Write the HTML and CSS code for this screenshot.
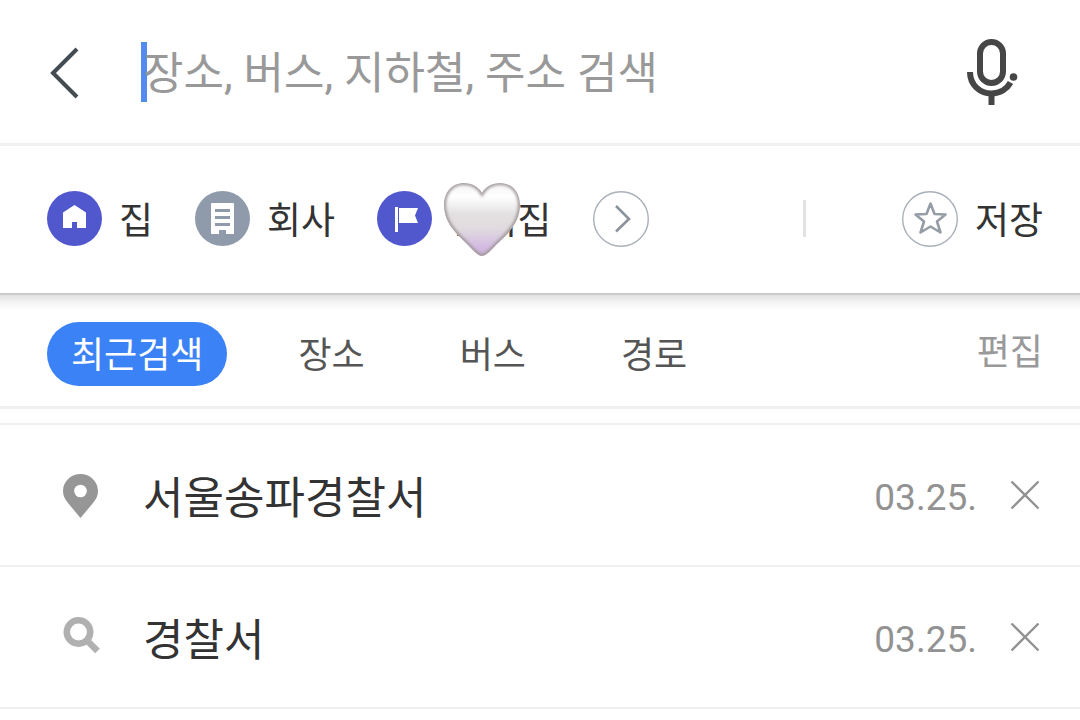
FILE: index.html
```html
<!DOCTYPE html>
<html lang="ko">
<head>
  <meta charset="UTF-8">
  <meta name="viewport" content="width=device-width, initial-scale=1">
  <title>검색</title>
  <link rel="stylesheet" href="styles.css">
</head>
<body>
  <header class="search-bar">
    <button type="button" class="back" aria-label="뒤로">
      <svg width="32" height="54" viewBox="0 0 32 54">
        <path d="M29 3 L5 27 L29 51" fill="none" stroke="#444b53" stroke-width="4"/>
      </svg>
    </button>
    <div class="search-field">
      <input type="text" class="search-input" placeholder="장소, 버스, 지하철, 주소 검색" aria-label="검색">
      <span class="caret"></span>
    </div>
    <button type="button" class="mic" aria-label="음성 검색">
      <svg width="52" height="68" viewBox="0 0 52 68" fill="none" stroke="#464646" stroke-width="6">
        <rect x="14" y="3" width="23" height="41" rx="11.5"/>
        <path d="M4 33 C4 46 14 54.500 25.500 54.500 C34 54.500 41 50 44.500 43.500"/>
        <path d="M25.500 54 V66"/>
        <circle cx="47.500" cy="38" r="3.800" fill="#464646" stroke="none"/>
      </svg>
    </button>
  </header>

  <nav class="shortcuts">
    <button type="button" class="shortcut">
      <svg class="badge" viewBox="0 0 55 55">
        <circle cx="27.500" cy="27.500" r="27.500" fill="#5157cd"/>
        <path d="M27.500 14 L39 21.500 V37 H30 V31 H25 V37 H16 V21.500 Z" fill="#fff"/>
      </svg>
      <span class="shortcut-name">집</span>
    </button>
    <button type="button" class="shortcut">
      <svg class="badge" viewBox="0 0 55 55">
        <circle cx="27.500" cy="27.500" r="27.500" fill="#8f9aaa"/>
        <path d="M17 12 H38 Q39 12 39 13 V43 H31 V39 H24 V43 H16 V13 Q16 12 17 12 Z" fill="#fff"/>
        <path d="M20 19.500 H35 M20 26.500 H35 M20 33.500 H35" stroke="#8f9aaa" stroke-width="3"/>
      </svg>
      <span class="shortcut-name">회사</span>
    </button>
    <button type="button" class="shortcut">
      <svg class="badge" viewBox="0 0 55 55">
        <circle cx="27.500" cy="27.500" r="27.500" fill="#5157cd"/>
        <path d="M18 16 H21 V41 H18 Z M22 17 H41 L38 24.500 L41 32 H22 Z" fill="#fff"/>
      </svg>
      <span class="shortcut-name">언니집</span>
      <svg class="heart" width="80" height="78" viewBox="0 0 80 78">
        <defs>
          <linearGradient id="heart-fill" x1="0" y1="0" x2="0" y2="1">
            <stop offset="0" stop-color="#f4f2f3"/>
            <stop offset=".2" stop-color="#ffffff"/>
            <stop offset=".42" stop-color="#e4e1e2"/>
            <stop offset=".62" stop-color="#dfdade"/>
            <stop offset=".85" stop-color="#d3bae3"/>
            <stop offset="1" stop-color="#c5b0d0"/>
          </linearGradient>
          <clipPath id="heart-clip">
            <path d="M40 75 C36 75 31 69 24 62 C12 51 2 40 2 24 C2 11 10 2 22 2 C30 2 37 6 40 12 C43 6 50 2 58 2 C70 2 78 11 78 24 C78 40 68 51 56 62 C49 69 44 75 40 75 Z"/>
          </clipPath>
          <filter id="heart-edge">
            <feGaussianBlur stdDeviation="1.800"/>
          </filter>
        </defs>
        <g clip-path="url(#heart-clip)">
          <rect width="80" height="78" fill="url(#heart-fill)"/>
          <path d="M40 75 C36 75 31 69 24 62 C12 51 2 40 2 24 C2 11 10 2 22 2 C30 2 37 6 40 12 C43 6 50 2 58 2 C70 2 78 11 78 24 C78 40 68 51 56 62 C49 69 44 75 40 75 Z" fill="none" stroke="#a09799" stroke-width="4" filter="url(#heart-edge)"/>
        </g>
      </svg>
    </button>
    <button type="button" class="shortcut" aria-label="더보기">
      <svg class="ring" viewBox="0 0 56 56" fill="none">
        <circle cx="28" cy="28" r="27.300" stroke="#a9b0b8" stroke-width="1.400"/>
        <path d="M23 15 L36 28 L23 40.500" stroke="#8b939c" stroke-width="2.600"/>
      </svg>
    </button>
    <span class="divider"></span>
    <button type="button" class="shortcut">
      <svg class="ring" viewBox="0 0 56 56" fill="none">
        <circle cx="28" cy="28" r="27.300" stroke="#a9b0b8" stroke-width="1.400"/>
        <path d="M28.500 12.500 L32.500 23 L43.500 23.500 L35 30.500 L38.500 41.500 L28.500 35.500 L18.500 41.500 L22 30.500 L13.500 23.500 L24.500 23 Z" stroke="#959da6" stroke-width="2.600" stroke-linejoin="round"/>
      </svg>
      <span class="shortcut-name">저장</span>
    </button>
  </nav>

  <div class="tabs">
    <button type="button" class="tab active">최근검색</button>
    <button type="button" class="tab">장소</button>
    <button type="button" class="tab">버스</button>
    <button type="button" class="tab">경로</button>
    <button type="button" class="edit">편집</button>
  </div>

  <ul class="history">
    <li class="history-item">
      <svg class="history-icon" viewBox="0 0 38 46">
        <path d="M18.500 2 C28 2 36 9.500 36 19 C36 24 34 27.500 31 31 L18.500 46 L6 31 C3 27.500 1 24 1 19 C1 9.500 9 2 18.500 2 Z" fill="#969696"/>
        <circle cx="18.500" cy="19" r="6.300" fill="#fff"/>
      </svg>
      <a href="#" class="history-name">서울송파경찰서</a>
      <time class="history-date">03.25.</time>
      <button type="button" class="remove" aria-label="삭제">
        <svg width="30" height="30" viewBox="0 0 30 30">
          <path d="M1.500 1.500 L28.500 28.500 M28.500 1.500 L1.500 28.500" stroke="#929292" stroke-width="2.400"/>
        </svg>
      </button>
    </li>
    <li class="history-item">
      <svg class="history-icon" viewBox="0 0 38 46" fill="none" stroke="#b0b0b0">
        <circle cx="16.500" cy="18" r="11.700" stroke-width="6.600"/>
        <path d="M25 26.500 L35.500 37" stroke-width="6.600"/>
      </svg>
      <a href="#" class="history-name">경찰서</a>
      <time class="history-date">03.25.</time>
      <button type="button" class="remove" aria-label="삭제">
        <svg width="30" height="30" viewBox="0 0 30 30">
          <path d="M1.500 1.500 L28.500 28.500 M28.500 1.500 L1.500 28.500" stroke="#929292" stroke-width="2.400"/>
        </svg>
      </button>
    </li>
  </ul>
</body>
</html>
```
FILE: styles.css
```css
* {
  margin: 0;
  padding: 0;
  box-sizing: border-box;
}

body {
  background: #fff;
  color: #333;
  font-family: "Noto Sans CJK KR", sans-serif;
}

button {
  border: 0;
  background: none;
  color: inherit;
  font: inherit;
  cursor: pointer;
}

svg {
  display: block;
  flex: none;
}

/* search bar */

.search-bar {
  display: flex;
  align-items: center;
  height: 146px;
  padding: 2px 62px 0 48px;
  border-bottom: 3px solid #f1f1f1;
}

.search-field {
  position: relative;
  flex: 1;
  margin-left: 63px;
}

.search-input {
  display: block;
  width: 100%;
  height: 62px;
  padding-top: 2px;
  border: 0;
  outline: 0;
  background: none;
  color: #333;
  font-family: Roboto, "Noto Sans CJK KR", sans-serif;
  font-size: 44px;
}

.search-input::placeholder {
  color: #999;
  opacity: 1;
}

.caret {
  position: absolute;
  z-index: -1;
  left: -2px;
  top: 0;
  width: 6px;
  height: 60px;
  background: #548bf0;
}

/* shortcuts */

.shortcuts {
  display: flex;
  align-items: center;
  gap: 42px;
  height: 149px;
  padding: 0 37px 2px 47px;
  border-bottom: 2px solid #cbcbcb;
}

.shortcut {
  position: relative;
  display: flex;
  align-items: center;
  gap: 17px;
  font-size: 37px;
  line-height: 54px;
  white-space: nowrap;
}

.shortcut-name {
  padding-bottom: 2px;
}

.badge {
  width: 55px;
  height: 55px;
}

.ring {
  width: 56px;
  height: 56px;
}

.heart {
  position: absolute;
  left: 65px;
  top: -10px;
}

.divider {
  width: 3px;
  height: 37px;
  margin-left: auto;
  margin-right: 54px;
  background: #e2e2e2;
}

/* tabs */

.tabs {
  display: flex;
  gap: 47px;
  padding: 27px 37px 20px 47px;
  border-bottom: 3px solid #f0f0f0;
  background: linear-gradient(#e0e0e0, #f3f3f3 7px, #fff 16px);
}

.tab {
  height: 64px;
  padding: 0 24px 4px;
  border-radius: 32px;
  color: #555;
  font-size: 36px;
}

.tab.active {
  background: #3b82f6;
  color: #fff;
}

.edit {
  height: 58px;
  padding-bottom: 4px;
  margin-left: auto;
  color: #999;
  font-size: 36px;
}

/* history */

.history {
  margin-top: 14px;
  border-top: 2px solid #efefef;
  list-style: none;
}

.history-item {
  display: flex;
  align-items: center;
  height: 142px;
  padding: 0 40px 0 62px;
  border-bottom: 2px solid #efefef;
}

.history-icon {
  width: 38px;
  height: 46px;
}

.history-name {
  flex: 1;
  margin-left: 43px;
  color: #333;
  font-size: 44px;
  text-decoration: none;
}

.history-date {
  padding-top: 4px;
  color: #929292;
  font-family: Roboto, "Noto Sans CJK KR", sans-serif;
  font-size: 37px;
}

.remove {
  margin-left: 33px;
}
```
